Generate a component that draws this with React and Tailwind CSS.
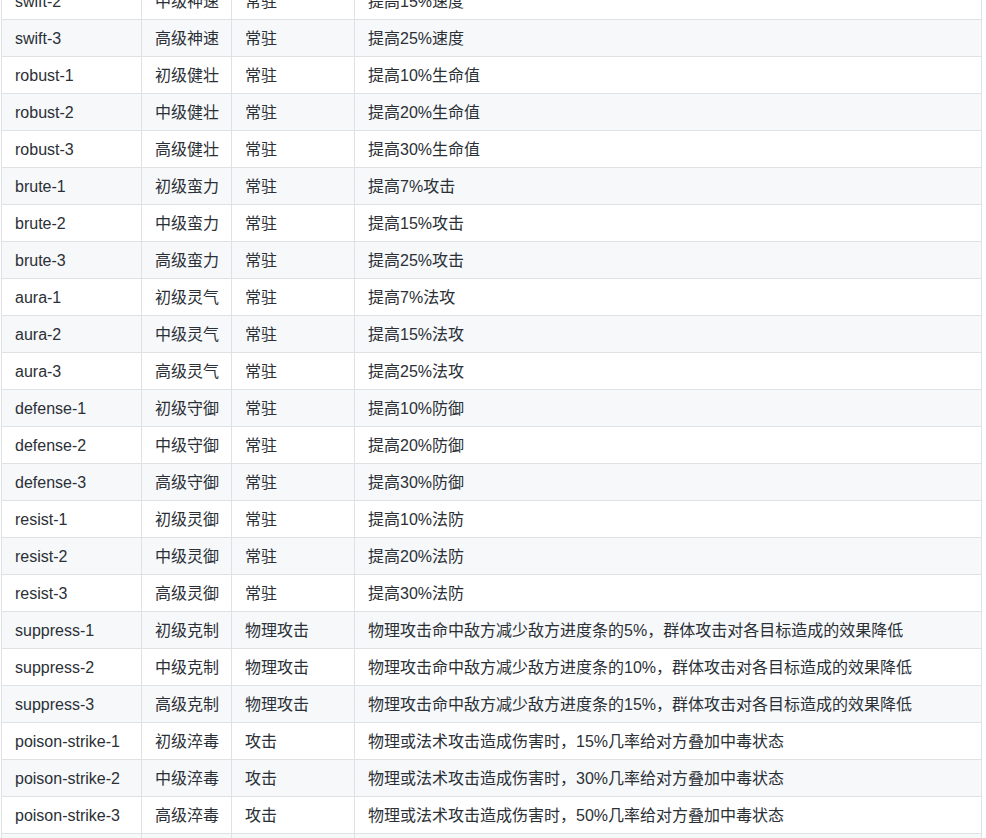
const ROWS = [
  ['swift-2', '中级神速', '常驻', '提高15%速度'],
  ['swift-3', '高级神速', '常驻', '提高25%速度'],
  ['robust-1', '初级健壮', '常驻', '提高10%生命值'],
  ['robust-2', '中级健壮', '常驻', '提高20%生命值'],
  ['robust-3', '高级健壮', '常驻', '提高30%生命值'],
  ['brute-1', '初级蛮力', '常驻', '提高7%攻击'],
  ['brute-2', '中级蛮力', '常驻', '提高15%攻击'],
  ['brute-3', '高级蛮力', '常驻', '提高25%攻击'],
  ['aura-1', '初级灵气', '常驻', '提高7%法攻'],
  ['aura-2', '中级灵气', '常驻', '提高15%法攻'],
  ['aura-3', '高级灵气', '常驻', '提高25%法攻'],
  ['defense-1', '初级守御', '常驻', '提高10%防御'],
  ['defense-2', '中级守御', '常驻', '提高20%防御'],
  ['defense-3', '高级守御', '常驻', '提高30%防御'],
  ['resist-1', '初级灵御', '常驻', '提高10%法防'],
  ['resist-2', '中级灵御', '常驻', '提高20%法防'],
  ['resist-3', '高级灵御', '常驻', '提高30%法防'],
  ['suppress-1', '初级克制', '物理攻击', '物理攻击命中敌方减少敌方进度条的5%，群体攻击对各目标造成的效果降低'],
  ['suppress-2', '中级克制', '物理攻击', '物理攻击命中敌方减少敌方进度条的10%，群体攻击对各目标造成的效果降低'],
  ['suppress-3', '高级克制', '物理攻击', '物理攻击命中敌方减少敌方进度条的15%，群体攻击对各目标造成的效果降低'],
  ['poison-strike-1', '初级淬毒', '攻击', '物理或法术攻击造成伤害时，15%几率给对方叠加中毒状态'],
  ['poison-strike-2', '中级淬毒', '攻击', '物理或法术攻击造成伤害时，30%几率给对方叠加中毒状态'],
  ['poison-strike-3', '高级淬毒', '攻击', '物理或法术攻击造成伤害时，50%几率给对方叠加中毒状态'],
  ['poison-strike-4', '特级淬毒', '攻击', '物理或法术攻击造成伤害时，70%几率给对方叠加中毒状态'],
];

const cell = 'border border-[#dfe2e5] px-[13px] pt-[7px] pb-[5px] leading-6 whitespace-nowrap';

export default function App() {
  return (
    <div className="h-[838px] overflow-hidden bg-white">
      <table
        className="-mt-[18px] ml-[1px] w-[981px] table-fixed border-collapse text-[16px] text-[#2b3036]"
        style={{ fontFamily: '"Liberation Sans", "Noto Sans CJK SC", sans-serif' }}
      >
        <colgroup>
          <col className="w-[140px]" />
          <col className="w-[90px]" />
          <col className="w-[123px]" />
          <col />
        </colgroup>
        <tbody>
          {ROWS.map((r, i) => (
            <tr key={r[0]} className={i % 2 === 1 ? 'bg-[#f6f8fa]' : 'bg-white'}>
              {r.map((c, j) => (
                <td key={j} className={cell}>{c}</td>
              ))}
            </tr>
          ))}
        </tbody>
      </table>
    </div>
  );
}
